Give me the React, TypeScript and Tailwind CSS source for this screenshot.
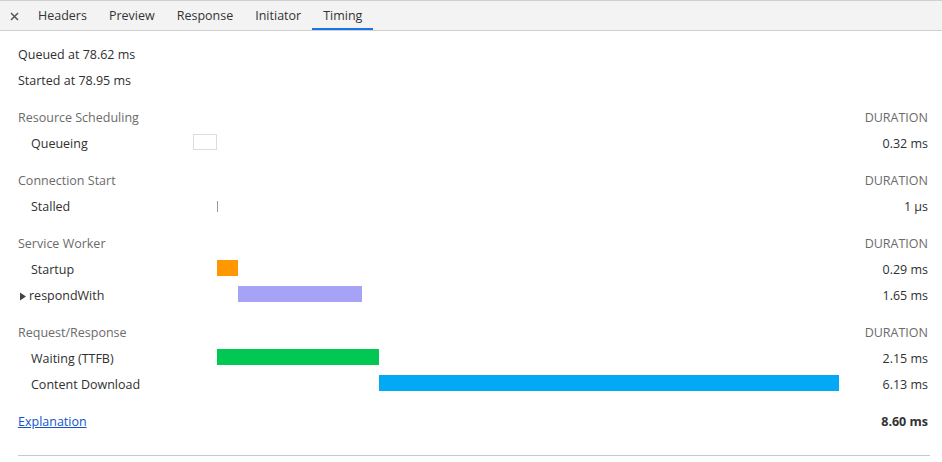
import React from 'react';

type Bar = { label: string; left: number; width: number; color: string; text: string; expandable?: boolean; kind?: 'box' | 'line' };

// left/width in px from the start of the waterfall track (75px per ms)
const sections: { title: string; rows: Bar[] }[] = [
  {
    title: 'Resource Scheduling',
    rows: [{ label: 'Queueing', left: 0, width: 24, color: 'bg-white', text: '0.32 ms', kind: 'box' }],
  },
  {
    title: 'Connection Start',
    rows: [{ label: 'Stalled', left: 24, width: 1, color: 'bg-[#999]', text: '1 µs', kind: 'line' }],
  },
  {
    title: 'Service Worker',
    rows: [
      { label: 'Startup', left: 24, width: 21, color: 'bg-[#ff9800]', text: '0.29 ms' },
      { label: 'respondWith', left: 45, width: 124, color: 'bg-[#a6a3f7]', text: '1.65 ms', expandable: true },
    ],
  },
  {
    title: 'Request/Response',
    rows: [
      { label: 'Waiting (TTFB)', left: 24, width: 162, color: 'bg-[#00c853]', text: '2.15 ms' },
      { label: 'Content Download', left: 186, width: 460, color: 'bg-[#03a9f4]', text: '6.13 ms' },
    ],
  },
];

function Row({ row }: { row: Bar }) {
  return (
    <div className="flex h-[26px] items-center">
      <div className="w-[175px] shrink-0 flex items-center">
        {row.expandable ? (
          <>
            <svg width="11" height="9" viewBox="0 0 11 9" className="shrink-0">
              <path d="M2 0.5L8 4.5L2 8.5Z" fill="#444" />
            </svg>
            <span>{row.label}</span>
          </>
        ) : (
          <span className="pl-[13px]">{row.label}</span>
        )}
      </div>
      <div className="relative h-full flex-1">
        {row.kind === 'line' ? (
          <div className="absolute top-[7px] h-[11px] w-px bg-[#999]" style={{ left: row.left }} />
        ) : (
          <div
            className={`absolute top-[3px] h-4 ${row.color} ${row.kind === 'box' ? 'border border-[#dcdcdc]' : ''}`}
            style={{ left: row.left, width: row.width }}
          />
        )}
      </div>
      <div className="w-[80px] shrink-0 text-right">{row.text}</div>
    </div>
  );
}

export default function App() {
  const tabs = ['Headers', 'Preview', 'Response', 'Initiator', 'Timing'];
  return (
    <div className="w-[942px] h-[462px] bg-white text-[#303030] text-[12.5px] overflow-hidden" style={{ fontFamily: '"Open Sans", sans-serif' }}>
      <div className="flex h-[31px] items-stretch border-t border-b border-[#d0d0d0] bg-[#f3f3f3] text-[#333]">
        <div className="flex w-[27px] items-center justify-center pl-[1px] pt-[1px]">
          <svg width="9" height="9" viewBox="0 0 9 9">
            <path d="M1 1L8 8M8 1L1 8" stroke="#555" strokeWidth="1.5" />
          </svg>
        </div>
        {tabs.map((t) => (
          <div
            key={t}
            className={`flex items-center px-[11px] ${t === 'Timing' ? 'border-b-2 border-[#1a73e8] pt-[4px]' : 'pt-[2px]'}`}
          >
            {t}
          </div>
        ))}
      </div>

      <div className="pl-[18px] pr-[14px] pt-[11px]">
        <div className="flex h-[26px] items-center">Queued at 78.62 ms</div>
        <div className="flex h-[26px] items-center">Started at 78.95 ms</div>

        {sections.map((s) => (
          <div key={s.title} className="mt-[11px]">
            <div className="flex h-[26px] items-center justify-between text-[#6b6b6b]">
              <span>{s.title}</span>
              <span>DURATION</span>
            </div>
            {s.rows.map((r) => (
              <Row key={r.label} row={r} />
            ))}
          </div>
        ))}

        <div className="mt-[11px] flex h-[26px] items-center justify-between">
          <a href="#" className="text-[#1155cc] underline">Explanation</a>
          <span className="font-bold text-[#333]">8.60 ms</span>
        </div>
        <div className="mt-[20px] h-px bg-[#c8c8c8] mr-[-2px]" />
      </div>
    </div>
  );
}
